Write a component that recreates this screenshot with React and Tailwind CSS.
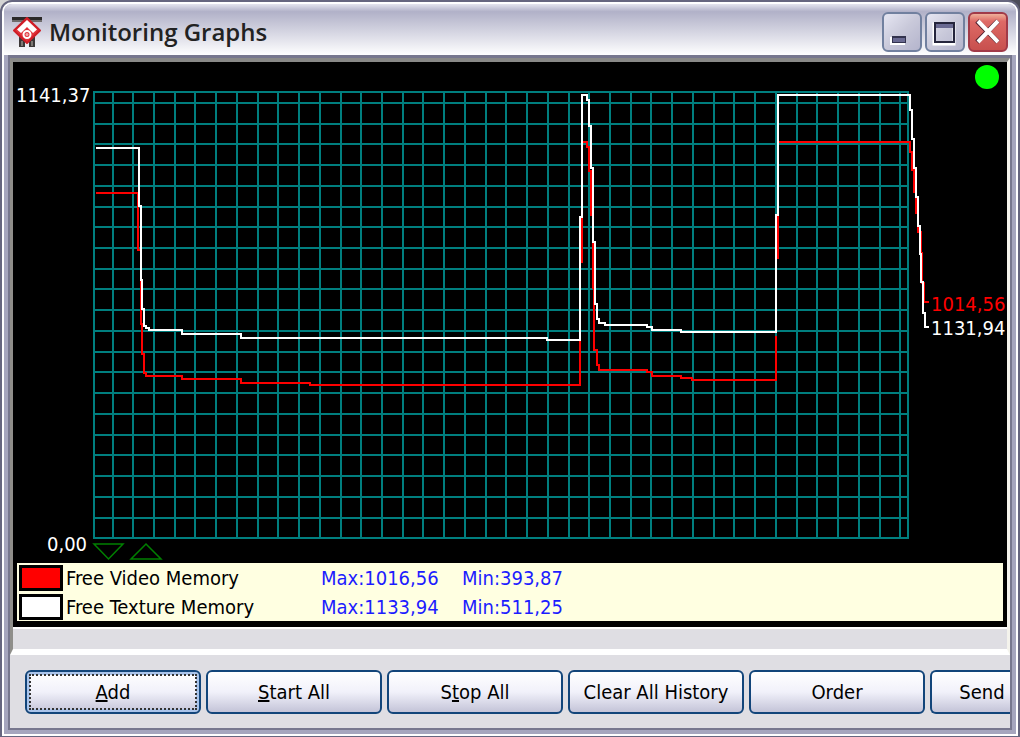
import React from "react";

const range = (n) => Array.from({ length: n }, (_, i) => i);

const series = [
  { name: "Free Video Memory", max: "1016,56", min: "393,87", swatch: "bg-[#ff0000]" },
  { name: "Free Texture Memory", max: "1133,94", min: "511,25", swatch: "bg-white" },
];

const RED =
  "M96 193H138V250H141V324H142V354H144V373H146V376H182V379H241V383H310V385H580V341M582 263V142H587V147H589V171H591V215H593V288H594V350H597V365H599V370H647V372H652V376H681V378H692V380H776V336M778 259V142H910V152H912V170H914V192H916V213H918V232H921V253H922V283H924V302H929";
const WHITE =
  "M96 148H139V206H141V280H142V309H144V326H146V328H149V330H182V334H241V338H547V340H580V217H582V95H587V100H589V126H591V168H593V242H595V304H597V319H599V323H605V325H647V327H652V330H681V332H776V215H778V95H910V110H912V139H914V168H916V197H918V226H920V254H921V282H923V313H925V327H929";

function AppIcon() {
  return (
    <svg viewBox="0 0 32 32" className="size-8 shrink-0" aria-hidden="true">
      <path d="M1 1h30v4H1z" fill="#2b2929" />
      <path d="M1 4h30v2H1z" fill="#6e6b6b" />
      <path d="M8 20h6v11H8zM18 20h6v11h-6z" fill="#3c3838" />
      <path d="M10 25h2v5h-2zM20 25h2v5h-2z" fill="#7d7874" />
      <path d="M16 2L29 14.500 16 27 3 14.500z" fill="#e0323a" stroke="#cf1c26" strokeWidth="2" strokeLinejoin="round" />
      <path d="M16 4L26 13.500 22 17 16 11 10 17 6 13.500z" fill="#fff" />
      <circle cx="16" cy="18.500" r="3.500" fill="none" stroke="#fff" strokeWidth="2" />
      <circle cx="16" cy="18.500" r="1.500" fill="#f4a9ab" />
    </svg>
  );
}

function CaptionButton({ label, close, children }) {
  return (
    <button
      type="button"
      aria-label={label}
      className={
        "flex size-10 items-center justify-center rounded-md border-2 " +
        (close
          ? "border-[#a13a48] bg-linear-to-b from-[#eeb09a] via-[#de6a66] via-20% to-[#c8504e]"
          : "border-[#71809f] bg-linear-to-br from-[#e6e6f2] via-[#c9c9da] to-[#b4b4cc]")
      }
    >
      {children}
    </button>
  );
}

function Graph() {
  return (
    <svg
      viewBox="13 62 994 501"
      className="block h-auto w-full bg-black font-['DejaVu_Sans_Condensed','DejaVu_Sans',sans-serif] text-[20px]"
      role="img"
      aria-label="Free video and texture memory over time"
    >
      <g stroke="#007f7f" strokeWidth="2">
        <rect x="94" y="92" width="814" height="446" fill="none" />
        {range(39).map((i) => {
          const x = Math.round(112.500 + i * 20.730);
          return <path key={x} d={`M${x} 92V538`} />;
        })}
        {range(21).map((i) => {
          const y = Math.round(102.800 + i * 20.740);
          return <path key={y} d={`M94 ${y}H908`} />;
        })}
      </g>
      <path d={RED} fill="none" stroke="#ff0000" strokeWidth="2" />
      <path d={WHITE} fill="none" stroke="#fff" strokeWidth="2" />
      <g fill="none" stroke="#008000" strokeWidth="1.500">
        <path d="M94 544H123L108.500 559z" />
        <path d="M131 559H161L146 544z" />
      </g>
      <circle cx="987" cy="77" r="12" fill="#00ff00" />
      <text x="16" y="102" fill="#fff">1141,37</text>
      <text x="47" y="551" fill="#fff">0,00</text>
      <text x="931" y="311" fill="#ff0000">1014,56</text>
      <text x="931" y="335" fill="#fff">1131,94</text>
    </svg>
  );
}

function Command({ children, focused, last }) {
  return (
    <button
      type="button"
      className={
        "h-11 border-2 border-[#12457a] bg-linear-to-b from-white via-[#f1f1fa] to-[#c4c4d8] p-[2px] " +
        (last ? "min-w-0 flex-1 rounded-l-md border-r-0 pl-6 " : "w-44 shrink-0 rounded-md ") +
        (focused ? "shadow-[inset_0_0_0_3px_#aac4ea]" : "")
      }
    >
      <span
        className={
          "flex h-full items-center justify-center " +
          (focused ? "border-2 border-dotted border-[#333]" : "")
        }
      >
        <span>{children}</span>
      </span>
    </button>
  );
}

export default function App() {
  return (
    <main className="bg-linear-to-r from-[#d4d4d4] to-[#4c4c58] font-['DejaVu_Sans_Condensed','DejaVu_Sans',sans-serif] text-[20px] leading-7 text-black">
      <div className="rounded-t-xl border-2 border-[#66667f] bg-white p-[2px]">
        <div className="rounded-t-lg bg-[#a6a6be] px-1 pb-1">
          <header className="-mx-1 flex h-[51px] items-center justify-between rounded-t-lg bg-linear-to-b from-[#e4e4ee] via-[#b1b1c8] via-15% to-white pt-[5px] pr-2 pl-[7px]">
            <div className="flex items-center gap-[6px]">
              <AppIcon />
              <h1 className="font-['Open_Sans',sans-serif] text-[24px] font-semibold text-[#222]">Monitoring Graphs</h1>
            </div>
            <div className="flex gap-[3px]">
              <CaptionButton label="Minimize">
                <svg viewBox="0 0 40 40" className="size-10 shrink-0">
                  <path d="M8 25h15v8H8z" fill="#fff" />
                  <path d="M10 24h14v7H10z" fill="#33334e" />
                  <path d="M11 26h12v4H11z" fill="#6a6a92" />
                </svg>
              </CaptionButton>
              <CaptionButton label="Maximize">
                <svg viewBox="0 0 40 40" className="size-10 shrink-0">
                  <rect x="9" y="12" width="20" height="20" fill="none" stroke="#fff" strokeWidth="3" />
                  <rect x="10" y="11" width="19" height="19" fill="none" stroke="#25253c" strokeWidth="2" />
                  <path d="M11 12h17v4H11z" fill="#6a6a92" />
                </svg>
              </CaptionButton>
              <CaptionButton label="Close" close>
                <svg viewBox="0 0 40 40" className="size-10 shrink-0">
                  <path d="M9 9L30 30M30 9L9 30" stroke="#4e2030" strokeWidth="5" />
                  <path d="M10 9L30 30M30 9L10 30" stroke="#fff" strokeWidth="4" />
                </svg>
              </CaptionButton>
            </div>
          </header>
          <div className="border-t-3 border-r-2 border-l-2 border-b-2 border-[#77778e] bg-[#dfdee3]">
            <section className="border-t-4 border-r-3 border-b-[6px] border-l-3 border-t-[#8a8a88] border-r-[#f4f3ec] border-b-white border-l-[#8f8e8a]">
              <div className="border-b-2 border-white">
                <div className="bg-black pb-[6px]">
                  <Graph />
                  <table className="ml-1 w-[calc(100%-8px)] table-fixed bg-[#ffffe1] leading-[27px]">
                    <tbody>
                      {series.map((s) => (
                        <tr key={s.name} className="h-[29px]">
                          <td className="w-[49px] p-0 pl-[2px]">
                            <div className={"h-[26px] w-11 border-3 border-black " + s.swatch} />
                          </td>
                          <td className="w-[255px] p-0 pt-[2px]">{s.name}</td>
                          <td className="w-[141px] p-0 pt-[2px] text-[#1c1cff]">Max:{s.max}</td>
                          <td className="p-0 pt-[2px] text-[#1c1cff]">Min:{s.min}</td>
                        </tr>
                      ))}
                    </tbody>
                  </table>
                </div>
              </div>
              <div className="h-5" />
            </section>
            <nav className="flex gap-[5px] pt-[15px] pb-[14px] pl-[15px]">
              <Command focused>
                <u>A</u>dd
              </Command>
              <Command>
                <u>S</u>tart All
              </Command>
              <Command>
                S<u>t</u>op All
              </Command>
              <Command>Clear All History</Command>
              <Command>Order</Command>
              <Command last>Send</Command>
            </nav>
          </div>
        </div>
      </div>
    </main>
  );
}
